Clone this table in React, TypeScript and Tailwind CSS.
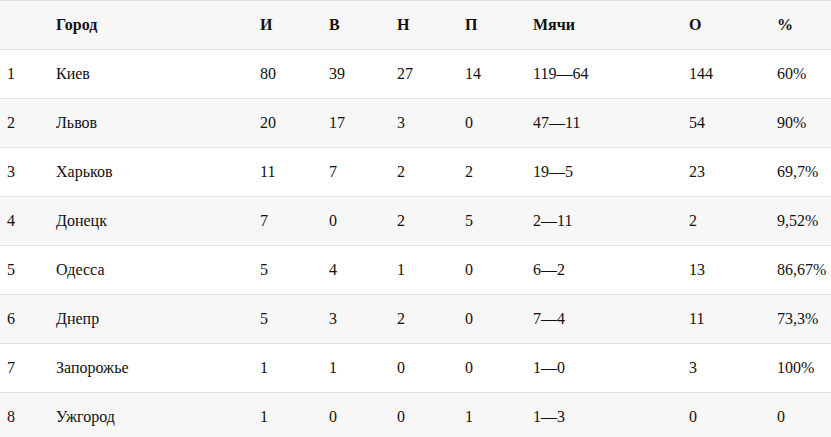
import React from 'react';

const rows = [
  ['1', 'Киев', '80', '39', '27', '14', '119—64', '144', '60%'],
  ['2', 'Львов', '20', '17', '3', '0', '47—11', '54', '90%'],
  ['3', 'Харьков', '11', '7', '2', '2', '19—5', '23', '69,7%'],
  ['4', 'Донецк', '7', '0', '2', '5', '2—11', '2', '9,52%'],
  ['5', 'Одесса', '5', '4', '1', '0', '6—2', '13', '86,67%'],
  ['6', 'Днепр', '5', '3', '2', '0', '7—4', '11', '73,3%'],
  ['7', 'Запорожье', '1', '1', '0', '0', '1—0', '3', '100%'],
  ['8', 'Ужгород', '1', '0', '0', '1', '1—3', '0', '0'],
];

const headers = ['', 'Город', 'И', 'В', 'Н', 'П', 'Мячи', 'О', '%'];

export default function App() {
  return (
    <div className="w-[831px] h-[437px] overflow-hidden bg-white text-[16px] text-[#111] font-['Liberation_Serif',serif]">
      <table className="w-full table-fixed border-collapse">
        <colgroup>
          <col className="w-[49px]" />
          <col className="w-[204px]" />
          <col className="w-[69px]" />
          <col className="w-[68px]" />
          <col className="w-[68px]" />
          <col className="w-[68px]" />
          <col className="w-[156px]" />
          <col className="w-[88px]" />
          <col className="w-[61px]" />
        </colgroup>
        <thead>
          <tr className="h-[49px] bg-[#f7f7f7] border-t border-[#e3e3e3]">
            {headers.map((h, i) => (
              <th key={i} className="px-[7px] text-left font-bold align-middle">
                {h}
              </th>
            ))}
          </tr>
        </thead>
        <tbody>
          {rows.map((r, idx) => (
            <tr
              key={idx}
              className={
                idx % 2 === 0
                  ? 'h-[49px] bg-white border-t border-[#e3e3e3]'
                  : 'h-[49px] bg-[#f7f7f7] border-t border-[#e3e3e3]'
              }
            >
              {r.map((c, i) => (
                <td key={i} className="px-[7px] text-left align-middle">
                  {c}
                </td>
              ))}
            </tr>
          ))}
        </tbody>
      </table>
    </div>
  );
}
